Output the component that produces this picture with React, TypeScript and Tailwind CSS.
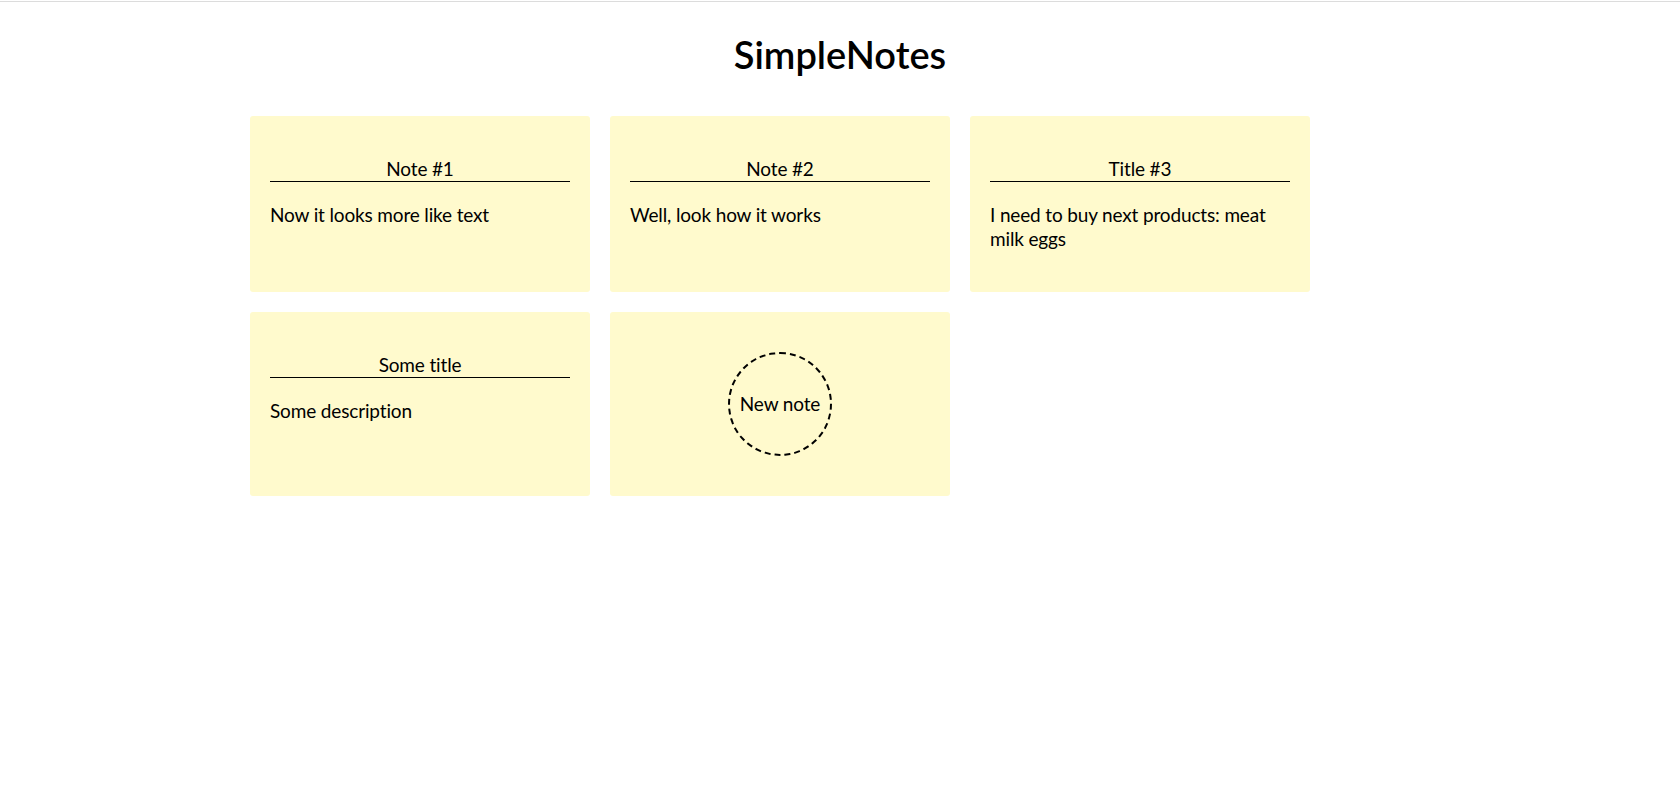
import React from "react";

const notes = [
  { title: "Note #1", body: "Now it looks more like text" },
  { title: "Note #2", body: "Well, look how it works" },
  { title: "Title #3", body: "I need to buy next products: meat milk eggs" },
  { title: "Some title", body: "Some description" },
];

function NoteCard({ title, body }: { title: string; body: string }) {
  return (
    <div className="flex flex-col rounded-[3px] bg-[#fffacd] px-5 pt-[41px] pb-[41px]">
      <div className="h-[25px] border-b border-black text-center text-[19px] leading-[23px] tracking-[-0.15px]">
        {title}
      </div>
      <p className="mt-[21px] text-[19px] leading-[24px] tracking-[-0.15px]">{body}</p>
    </div>
  );
}

export default function App() {
  return (
    <div className="min-h-screen bg-white text-black [font-family:Lato,'Liberation_Sans',sans-serif]">
      <div className="h-px mt-px bg-[#dcdcdc]" />
      <h1 className="pt-[29px] text-center text-[38px] font-semibold leading-[46px]">
        SimpleNotes
      </h1>
      <div className="mt-[39px] grid grid-cols-[repeat(3,340px)] gap-5 pl-[250px]">
        {notes.map((n) => (
          <NoteCard key={n.title} title={n.title} body={n.body} />
        ))}
        <div className="flex items-center justify-center rounded-[3px] bg-[#fffacd] py-10">
          <div className="flex h-[104px] w-[104px] items-center justify-center rounded-full border-2 border-dashed border-black text-[19px] leading-[24px] tracking-[-0.15px]">
            New note
          </div>
        </div>
      </div>
    </div>
  );
}
